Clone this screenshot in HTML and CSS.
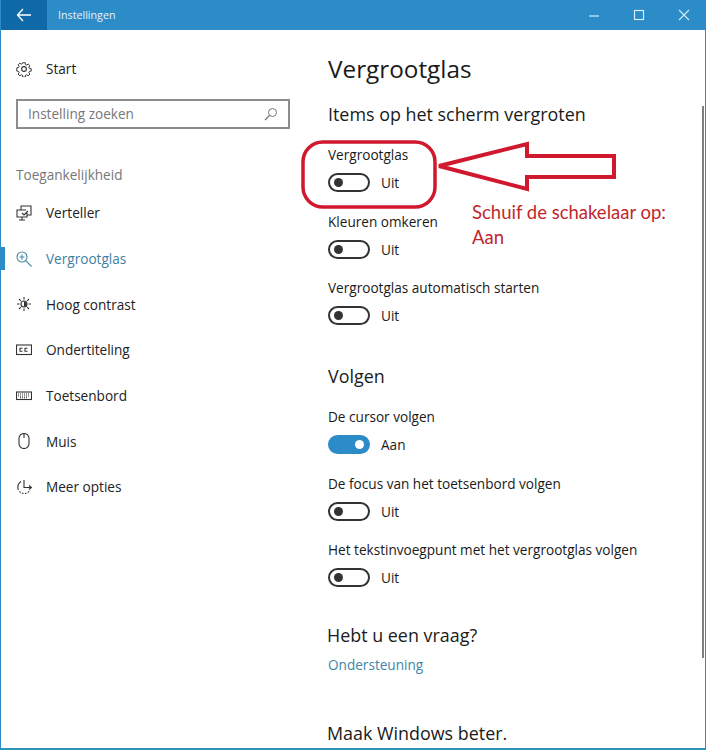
FILE: index.html
```html
<!DOCTYPE html>
<html lang="nl">
<head>
    <meta charset="UTF-8">
    <meta name="viewport" content="width=device-width, initial-scale=1.0">
    <title>Instellingen</title>
    <link rel="stylesheet" href="styles.css">
</head>
<body>
    <div class="window">
        <header class="titlebar">
            <div class="back">
                <svg width="16" height="14" viewBox="0 0 16 14"><path d="M7 1 1.500 7 7 13M1.500 7H15" fill="none" stroke="#fff" stroke-width="1.300"/></svg>
            </div>
            <span class="title">Instellingen</span>
            <div class="controls">
                <svg width="12" height="12" viewBox="0 0 12 12"><path d="M1 7h10" stroke="#d5ecfa" stroke-width="1.200"/></svg>
                <svg width="12" height="12" viewBox="0 0 12 12"><rect x="1.500" y="1.500" width="9" height="9" fill="none" stroke="#d5ecfa" stroke-width="1.200"/></svg>
                <svg width="12" height="12" viewBox="0 0 12 12"><path d="M1 1l10 10M11 1 1 11" stroke="#d5ecfa" stroke-width="1.100"/></svg>
            </div>
        </header>
        <div class="main">
            <nav class="sidebar">
                <div class="nav-item start">
                    <svg class="nav-icon" viewBox="0 0 16 16"><circle cx="8" cy="8" r="2.400"/><path d="M6.700 1h2.600l.4 2 1.300.6 1.700-1.100 1.800 1.800-1.100 1.700.6 1.300 2 .4v2.600l-2 .4-.6 1.300 1.100 1.700-1.800 1.800-1.700-1.100-1.300.6-.4 2H6.700l-.4-2-1.300-.6-1.700 1.100-1.800-1.800 1.100-1.700-.6-1.300-2-.4V6.700l2-.4.6-1.300-1.100-1.700 1.800-1.800 1.700 1.100 1.300-.6z" transform="translate(.8 .8) scale(.9)"/></svg>
                    <span>Start</span>
                </div>
                <div class="search">
                    <span>Instelling zoeken</span>
                    <svg width="14" height="14" viewBox="0 0 14 14"><circle cx="8.500" cy="5.500" r="4" fill="none" stroke="#777"/><path d="M5.500 8.500 1 13" stroke="#777" stroke-width="1.200"/></svg>
                </div>
                <div class="nav-group">Toegankelijkheid</div>
                <div class="nav-item">
                    <svg class="nav-icon" viewBox="0 0 16 16"><path d="M5 5V1h10v9H11M10 5H1v7h10V8M6 12v3M3 15h6M6 8l2 2 4-4"/></svg>
                    <span>Verteller</span>
                </div>
                <div class="nav-item active">
                    <svg class="nav-icon" viewBox="0 0 16 16"><circle cx="6" cy="6" r="5"/><path d="M9.700 9.700 15.500 15.500M3.500 6h5M6 3.500v5"/></svg>
                    <span>Vergrootglas</span>
                </div>
                <div class="nav-item">
                    <svg class="nav-icon" viewBox="0 0 16 16"><circle cx="8" cy="8" r="3"/><path class="solid" d="M8 5.500A2.500 2.500 0 0 1 8 10.500z"/><path d="M8 1v2.500M8 12.500V15M1 8h2.500M12.500 8H15M3 3l1.800 1.800M11.200 11.200 13 13M13 3l-1.800 1.800M4.800 11.200 3 13"/></svg>
                    <span>Hoog contrast</span>
                </div>
                <div class="nav-item">
                    <svg class="nav-icon" viewBox="0 0 16 16"><rect x=".5" y="3" width="15" height="9.500"/><path d="M6.500 6.300H4V9.300H6.500M11.500 6.300H9V9.300H11.500"/></svg>
                    <span>Ondertiteling</span>
                </div>
                <div class="nav-item">
                    <svg class="nav-icon" viewBox="0 0 16 16"><rect x=".5" y="4" width="15" height="7.500"/><path d="M2 6h12M2 8h12M4 9.800h8" stroke-dasharray="1 1"/></svg>
                    <span>Toetsenbord</span>
                </div>
                <div class="nav-item">
                    <svg class="nav-icon" viewBox="0 0 16 16"><path d="M3 5.500a5 5 0 0 1 10 0v5a5 5 0 0 1-10 0zM8 1v4"/></svg>
                    <span>Muis</span>
                </div>
                <div class="nav-item">
                    <svg class="nav-icon" viewBox="0 0 16 16"><path d="M5 2.500a6.500 6.500 0 0 0-2.500 8.500"/><path d="M3.500 12.500a6.500 6.500 0 0 0 10.500-1.500" stroke-dasharray="1.500 1.500"/><path d="M8 1v7.500h7M13 6.500l2.500 2-2.500 2"/></svg>
                    <span>Meer opties</span>
                </div>
            </nav>
            <main class="content">
                <h1>Vergrootglas</h1>
                <h2 class="first">Items op het scherm vergroten</h2>
                <div class="setting">
                    <div class="label">Vergrootglas</div>
                    <div class="toggle-row"><span class="toggle"></span><span>Uit</span></div>
                </div>
                <div class="setting">
                    <div class="label">Kleuren omkeren</div>
                    <div class="toggle-row"><span class="toggle"></span><span>Uit</span></div>
                </div>
                <div class="setting">
                    <div class="label">Vergrootglas automatisch starten</div>
                    <div class="toggle-row"><span class="toggle"></span><span>Uit</span></div>
                </div>
                <h2 class="section">Volgen</h2>
                <div class="setting">
                    <div class="label">De cursor volgen</div>
                    <div class="toggle-row"><span class="toggle on"></span><span>Aan</span></div>
                </div>
                <div class="setting">
                    <div class="label">De focus van het toetsenbord volgen</div>
                    <div class="toggle-row"><span class="toggle"></span><span>Uit</span></div>
                </div>
                <div class="setting">
                    <div class="label">Het tekstinvoegpunt met het vergrootglas volgen</div>
                    <div class="toggle-row"><span class="toggle"></span><span>Uit</span></div>
                </div>
                <h2 class="question">Hebt u een vraag?</h2>
                <a class="link">Ondersteuning</a>
                <h2 class="better">Maak Windows beter.</h2>
            </main>
            <div class="scrollbar"></div>
        </div>
        <svg class="callout" width="706" height="750" viewBox="0 0 706 750">
            <rect x="303" y="142" width="132" height="65" rx="20" fill="none" stroke="#d0192e" stroke-width="3.500"/>
            <path d="M439 166 527 144V156H614V177H527V189Z" fill="none" stroke="#d0192e" stroke-width="4"/>
        </svg>
        <div class="note">Schuif de schakelaar op:<br>Aan</div>
    </div>
</body>
</html>
```
FILE: styles.css
```css
* {
    box-sizing: border-box;
}
html, body {
    margin: 0;
    height: 100%;
}
body {
    font-family: "Open Sans", "Noto Sans", sans-serif;
    background-color: #fff;
    color: #1a1a1a;
    overflow: hidden;
}
.window {
    position: relative;
    width: 706px;
    height: 750px;
    border: 1px solid #2b8cc8;
    border-top: 0;
    border-bottom: 2px solid #2b96b8;
    overflow: hidden;
}
.titlebar {
    display: flex;
    align-items: center;
    height: 30px;
    background-color: #2b8cc8;
    color: #e6f3fb;
    font-size: 10.7px;
}
.back {
    display: flex;
    align-items: center;
    justify-content: center;
    width: 46px;
    height: 30px;
    background-color: #0f68a8;
}
.title {
    margin-left: 11px;
}
.controls {
    display: flex;
    gap: 33px;
    margin-left: auto;
    margin-right: 15px;
}
.main {
    display: flex;
    height: 718px;
}
.sidebar {
    width: 326px;
    flex-shrink: 0;
    font-size: 13.6px;
}
.nav-item {
    display: flex;
    align-items: center;
    gap: 14px;
    height: 45.67px;
    padding-left: 15px;
    color: #222;
}
.nav-item.start {
    margin-top: 16px;
}
.nav-icon {
    width: 16px;
    height: 16px;
    fill: none;
    stroke: #333;
    stroke-width: 1.1;
}
.nav-icon .solid {
    fill: #333;
    stroke: none;
}
.nav-item.active {
    position: relative;
    color: #3f7f9f;
}
.nav-item.active .nav-icon {
    stroke: #4a86a6;
}
.nav-item.active::before {
    content: "";
    position: absolute;
    left: -1px;
    top: 11px;
    width: 5px;
    height: 23px;
    background-color: #2b8cc8;
}
.search {
    display: flex;
    align-items: center;
    justify-content: space-between;
    width: 274px;
    height: 30px;
    margin: 7px 0 0 15px;
    padding: 0 10px;
    border: 2px solid #8c8c8c;
    color: #777;
}
.nav-group {
    margin: 36px 0 6.5px 15px;
    color: #777;
}
.content {
    flex: 1;
    padding-left: 1px;
    min-width: 0;
}
h1 {
    margin: 19px 0 0;
    font-size: 24.3px;
    font-weight: 400;
    line-height: 40px;
}
h2 {
    margin: 0;
    font-size: 17.9px;
    font-weight: 400;
    line-height: 30px;
}
h2.first {
    margin-top: 10px;
    margin-bottom: 16px;
}
.setting {
    font-size: 13.6px;
    margin-bottom: 15.5px;
}
.label {
    line-height: 20px;
}
.toggle-row {
    display: flex;
    align-items: center;
    gap: 11px;
    height: 27px;
    margin-top: 4px;
}
.toggle {
    position: relative;
    display: block;
    width: 42px;
    height: 19px;
    border: 2px solid #333;
    border-radius: 10px;
}
.toggle::after {
    content: "";
    position: absolute;
    left: 4px;
    top: 3px;
    width: 9px;
    height: 9px;
    border-radius: 50%;
    background-color: #333;
}
.toggle.on {
    background-color: #2b8cc8;
    border-color: #2b8cc8;
}
.toggle.on::after {
    left: auto;
    right: 4px;
    background-color: #fff;
}
.section {
    margin-top: 32px;
    margin-bottom: 16px;
}
.question {
    margin-top: 29px;
    margin-left: -1px;
}
.link {
    display: block;
    margin-top: 5px;
    font-size: 13.6px;
    color: #3f86a6;
}
.better {
    margin-top: 43.5px;
    margin-left: -1px;
}
.scrollbar {
    flex-shrink: 0;
    align-self: flex-start;
    width: 2px;
    height: 552px;
    margin: 76px 1px 0 auto;
    background-color: #7f7f7f;
}
.callout {
    position: absolute;
    left: -1px;
    top: 0;
    pointer-events: none;
}
.note {
    position: absolute;
    left: 471px;
    top: 200px;
    font-family: "Lato", "Open Sans", sans-serif;
    font-size: 18.5px;
    line-height: 25px;
    color: #c0272d;
}
```
